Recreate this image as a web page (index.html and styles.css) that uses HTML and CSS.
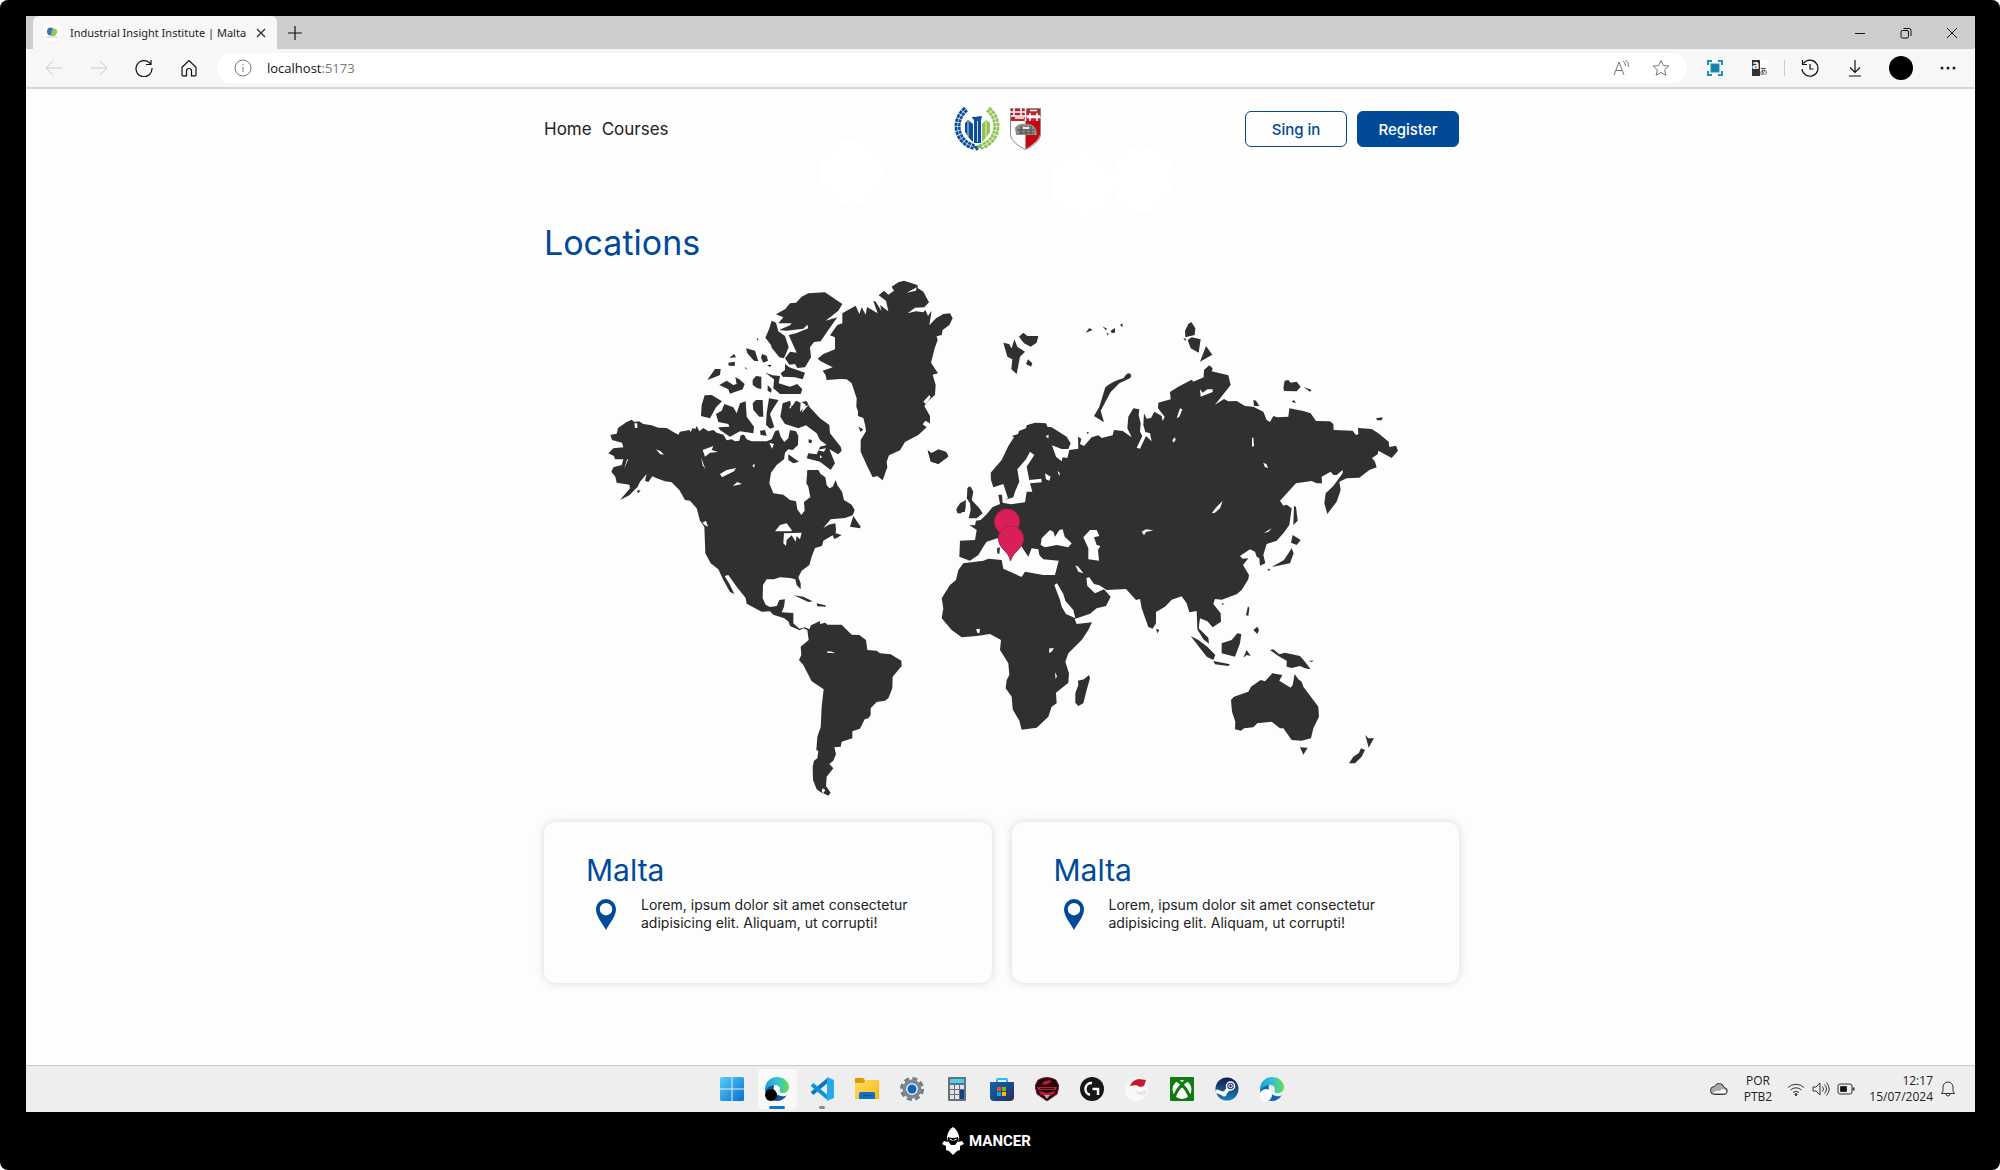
FILE: index.html
```html
<!DOCTYPE html>
<html lang="en">
<head>
<meta charset="utf-8">
<meta name="viewport" content="width=device-width, initial-scale=1">
<title>Industrial Insight Institute | Malta</title>
<link rel="stylesheet" href="styles.css">
</head>
<body>
<div class="monitor">
  <div class="screen">
    <div class="tabstrip">
      <div class="tab">
        <svg class="favicon" viewBox="0 0 16 16" aria-hidden="true"><rect width="16" height="16" rx="2" fill="#fff"/><ellipse cx="6.500" cy="6.500" rx="3.500" ry="4" fill="#3c74b4"/><path d="M7 10.500a4 4 0 0 0 4-7L8 5z" fill="#9ac45c"/><path d="M2 12h12" stroke="#dbe4f0" stroke-width="2"/></svg>
        <span class="tab-title">Industrial Insight Institute | Malta</span>
        <button class="tab-close" aria-label="Close tab"><svg class="ic10" viewBox="0 0 10 10"><path d="M1 1l8 8M9 1l-8 8"/></svg></button>
      </div>
      <button class="new-tab" aria-label="New tab"><svg class="ic14" viewBox="0 0 14 14"><path d="M7 0v14M0 7h14"/></svg></button>
      <div class="window-buttons">
        <button aria-label="Minimize"><svg class="ic12" viewBox="0 0 12 12"><path d="M1 6.500h10"/></svg></button>
        <button aria-label="Restore"><svg class="ic12" viewBox="0 0 12 12"><rect x="1" y="3.500" width="7.500" height="7.500" rx="1.500"/><path d="M3.500 1.500H9a2 2 0 0 1 2 2V9"/></svg></button>
        <button aria-label="Close"><svg class="ic12" viewBox="0 0 12 12"><path d="M1 1l10 10M11 1L1 11"/></svg></button>
      </div>
    </div>

    <div class="toolbar">
      <button class="tool dim" aria-label="Back"><svg class="ic18" viewBox="0 0 18 18"><path d="M17 9H1.500M8 2L1 9l7 7"/></svg></button>
      <button class="tool dim" aria-label="Forward"><svg class="ic18" viewBox="0 0 18 18"><path d="M1 9h15.500M10 2l7 7-7 7"/></svg></button>
      <button class="tool strong" aria-label="Refresh"><svg class="ic18" viewBox="0 0 18 18"><path d="M15.500 5A8 8 0 1 0 17 9M16 1v4.500h-5"/></svg></button>
      <button class="tool strong" aria-label="Home"><svg class="ic18" viewBox="0 0 18 18"><path d="M2 8.200L9 1.500l7 6.700V16q0 .800-.800.800H11.500V12a2.500 2.500 0 0 0-5 0v4.800H2.800Q2 16.800 2 16z"/></svg></button>
      <div class="address">
        <svg class="ic18 grey" viewBox="0 0 18 18" aria-hidden="true"><circle cx="9" cy="9" r="8"/><path d="M9 8v5M9 5v1.200"/></svg>
        <span class="url">localhost<span class="port">:5173</span></span>
        <button class="in-address" aria-label="Read aloud"><svg class="ic18 grey" viewBox="0 0 18 18"><path d="M2 16L7 3l5 13M4 11.500h6.500M11 2q2.500 1.500 2.500 5M13.500 1Q17 3 16.500 8"/></svg></button>
        <button class="in-address" aria-label="Add to favorites"><svg class="ic18 grey" viewBox="0 0 18 18"><path d="M9 1.500l2.300 5 5.500.600-4.100 3.700 1.200 5.500L9 13.500l-4.900 2.800 1.200-5.500L1.200 7.100l5.500-.600z"/></svg></button>
      </div>
      <div class="tools">
        <button class="tool" aria-label="Screenshot"><svg class="ic16 capture" viewBox="0 0 16 16"><rect x="4" y="4" width="8" height="8" fill="#1580ab"/><path stroke-width="2" d="M1 5V1h4M11 1h4v4M15 11v4h-4M5 15H1v-4"/></svg></button>
        <button class="tool" aria-label="Translate"><span class="translate"><span class="tr-a">a</span><span class="tr-b">あ</span></span></button>
        <span class="divider"></span>
        <button class="tool strong" aria-label="History"><svg class="ic18" viewBox="0 0 18 18"><path d="M2.500 4.500A8 8 0 1 1 1 10M1.500 1v4.500H6M9 5v5h3.500"/></svg></button>
        <button class="tool strong" aria-label="Downloads"><svg class="ic18" viewBox="0 0 18 18"><path d="M9 1v12M4 8.500l5 5 5-5M3 17h12"/></svg></button>
        <button class="tool wide" aria-label="Profile"><span class="avatar"></span></button>
        <button class="tool wide" aria-label="Settings and more"><svg class="ic18" viewBox="0 0 18 18"><g fill="#222" stroke="none"><circle cx="3" cy="9" r="1.500"/><circle cx="9" cy="9" r="1.500"/><circle cx="15" cy="9" r="1.500"/></g></svg></button>
      </div>
    </div>

    <main class="page">
      <div class="container">
        <span class="glow glow-a"></span><span class="glow glow-b"></span><span class="glow glow-c"></span>
        <header class="site-header">
          <nav class="nav"><a href="#">Home</a><a href="#">Courses</a></nav>
          <div class="logos">
            <svg class="laurel" viewBox="0 0 46 46" role="img" aria-label="Industrial Insight Institute">
              <path d="M12 3C4 10 1 20 6 30c3 6 8 9 14 11" fill="none" stroke="#0b4f9c" stroke-width="6" stroke-dasharray="3.400 .700"/>
              <path d="M12 3C4 10 1 20 6 30c3 6 8 9 14 11" fill="none" stroke="#fdfdfd" stroke-width=".600"/>
              <path d="M34 3c8 7 11 17 6 27-3 6-8 9-14 11" fill="none" stroke="#92c154" stroke-width="6" stroke-dasharray="3.400 .700"/>
              <path d="M34 3c8 7 11 17 6 27-3 6-8 9-14 11" fill="none" stroke="#fdfdfd" stroke-width=".600"/>
              <path d="M18 12q0-2 3-1l6-1q2 1 0 3v24h-7V14z" fill="#0b4f9c"/>
              <path d="M11 17l3-3 5 4v18l-4-4-4-6z" fill="#0b4f9c"/><path d="M14 15v16M23.500 15v21M19.500 16v20" stroke="#fdfdfd" stroke-width=".800"/>
              <path d="M28 18l4-4 4 3v9l-4 6-4 4z" fill="#92c154"/><path d="M32 15v17" stroke="#fdfdfd" stroke-width=".800"/>
              <path d="M19 40l4 5 4-5z" fill="#0b4f9c"/><path d="M23 39h4l-3 5z" fill="#92c154"/>
            </svg>
            <svg class="shield" viewBox="0 0 31 42" role="img" aria-label="Malta">
              <path d="M.500.500h30v27q-2 8-15 14-13-6-15-14z" fill="#fdfdfd" stroke="#8b8b8b"/>
              <path d="M15.500 13H30v14q-2 7-14.500 14z" fill="#c4080f"/>
              <path d="M1 1h29v12H1z" fill="#b9252c"/>
              <path d="M0 4h15M4 0v8M11 0v8M17 9.500h14M20 5v8M27 5v8M5 10h9M1 8h29M15.500 0v13M20 2.500h7" stroke="#fff" stroke-width="1.500"/>
              <path d="M5 20q3-5 10-4 8-1 11 5l1 6H6z" fill="#8d8d8d"/><path d="M7 22h18M9 25h15M11 18v8M16 18v8M21 18v8" stroke="#4f4f4f"/><path d="M13 20h6" stroke="#eee" stroke-width="2"/>
            </svg>
          </div>
          <div class="actions"><button class="btn btn-outline">Sing in</button><button class="btn btn-solid">Register</button></div>
        </header>

        <h1 class="title">Locations</h1>

        <svg class="map" viewBox="544 270 915 532" role="img" aria-label="World map">
          <!-- Americas and Greenland -->
          <g transform="translate(590 270) scale(.33333)">
            <path class="land" d="M125 449L133 456 147 454 160 462 185 466 205 473 230 474 250 486 265 494 270 485 298 480 302 486 308 474 316 477 320 468 328 484 340 474 355 484 370 480 380 488 400 494 410 511 425 508 435 514 448 512 452 496 462 494 470 508 485 514 530 514 545 508 555 484 566 480 572 500 583 516 595 505 600 480 618 484 625 498 624 525 608 540 595 538 585 548 582 568 560 585 543 608 538 640 550 670 580 674 600 690 618 694 622 718 634 735 644 722 642 696 661 681 655 650 649 640 652 600 685 600 692 612 706 622 710 645 718 655 728 650 737 630 742 645 756 665 762 690 785 704 794 720 788 736 765 744 722 748 700 774 716 764 736 760 738 778 737 790 755 795 740 804 733 807 728 796 700 812 696 828 675 834 665 860 658 885 635 902 625 922 632 940 632 958 620 945 616 928 600 924 570 922 552 928 530 928 519 945 518 985 527 1004 540 1011 560 1008 568 990 585 988 582 1010 575 1027 610 1029 610 1060 628 1076 645 1072 658 1078 663 1066 690 1053 690 1062 706 1058 712 1064 755 1064 785 1094 808 1095 828 1110 832 1140 860 1142 870 1150 902 1153 934 1172 935 1188 908 1220 907 1255 895 1285 885 1292 860 1296 842 1315 842 1335 835 1345 824 1348 810 1376 787 1384 787 1405 755 1415 752 1430 733 1432 738 1452 730 1472 718 1482 730 1495 710 1520 708 1548 722 1568 715 1577 690 1565 680 1558 669 1530 668 1490 672 1472 682 1465 685 1443 679 1440 682 1400 692 1372 695 1310 701 1258 665 1234 640 1185 627 1170 634 1155 632 1130 656 1110 652 1080 640 1075 629 1081 600 1068 596 1055 583 1045 550 1034 540 1024 515 1025 470 1001 467 984 440 950 415 915 404 918 420 945 433 972 420 966 410 948 400 930 385 898 362 880 346 850 343 770 330 752 320 715 300 692 285 690 268 660 245 637 225 634 200 625 187 619 175 636 165 632 170 612 150 635 143 650 118 676 90 690 120 655 118 644 80 638 76 620 64 605 70 592 95 585 100 568 75 568 72 558 55 550 70 535 100 532 96 518 66 510 61 495 80 491 84 474 110 456Z"/>
            <path class="land" d="M905 50L925 37 942 32 982 45 984 55 1000 65 1017 97 1003 112 975 113 953 130 978 124 1000 127 1006 120 1014 138 1025 122 1018 166 1038 145 1060 132 1080 130 1088 145 1078 165 1058 180 1055 195 1040 199 1043 210 1034 235 1023 278 1044 310 1028 314 1037 345 1035 375 1015 392 1003 408 1020 438 1020 460 1006 452 998 463 1010 472 985 495 945 516 930 541 897 556 890 575 892 592 878 631 862 618 848 622 830 585 812 545 812 510 828 484 826 468 820 444 804 438 804 424 799 410 800 385 785 340 770 328 750 327 710 330 707 316 698 302 728 292 692 274 683 266 700 252 735 238 735 202 720 196 742 165 757 160 757 130 797 107 808 132 815 112 827 134 831 111 863 130 850 93 856 94 875 124 870 105 895 124 888 92 866 76 882 62 895 74 912 62ZM558 133L586 117 600 100 618 98 635 80 655 70 705 67 757 102 745 122 707 152 742 142 715 180 692 214 672 216 660 232 663 262 645 292 622 294 615 282 598 284 585 265 600 245 620 248 596 195 618 190 655 175 652 164 640 176 590 182 567 180 600 166 605 160 565 160 580 142ZM545 152L558 158 565 184 585 198 596 232 582 265 568 262 545 233 543 225 526 203 537 178ZM468 235L495 242 505 274 492 272 472 250ZM516 252L530 257 534 272 520 278 513 263ZM418 264L432 252 438 262ZM415 278L435 275 434 288 416 287ZM352 330L375 297 392 297 390 315 374 322ZM388 345L410 332 430 345 440 342 436 322 448 328 464 342 458 358 420 371 415 358ZM488 330L498 318 514 320 514 357 502 355 488 345ZM533 345L545 358 543 368 533 362ZM526 308L548 316 570 318 566 340 600 350 622 342 637 358 632 372 570 372 550 355 552 328ZM572 310L585 300 585 282 598 292 615 298 645 308 638 328 615 322 578 320ZM344 376L365 375 396 394 378 412 360 445 333 438 335 405ZM403 402L430 412 440 430 450 400 467 394 470 440 492 470 490 490 450 484 420 500 390 480 385 472 418 470 415 462 385 456 378 432 395 422ZM488 400L498 390 518 390 520 440 508 440 490 420ZM537 385L566 390 550 415 540 432 553 472 540 476 528 464 530 430ZM578 400L600 392 605 410 618 392 632 398 630 425 648 405 635 396 650 393 658 410 690 445 718 465 720 490 752 530 755 542 745 553 718 538 735 580 722 600 690 575 650 565 655 550 680 553 690 530 710 525 690 510 680 490 648 466 625 475 585 462 571 440ZM510 482L525 480 530 497 512 495ZM595 553L627 575 610 580 595 570ZM1013 541L1022 550 1045 540 1070 548 1075 560 1045 582 1022 572ZM780 770L790 738 812 770 810 775ZM1132 655L1140 650V685L1132 675ZM1103 710L1125 695 1127 712 1110 732 1100 722ZM656 508L666 510 664 520 656 518ZM805 470L820 478 812 486ZM612 976L640 980 668 994 655 996ZM680 1000L706 1006 708 1010 682 1009ZM140 662L152 660 145 670ZM532 285L545 284 540 292ZM500 205L506 206 503 212ZM465 290L470 295 468 300ZM283 707L292 713"/>
            <path class="sea" d="M198 538L212 544 222 554 210 552ZM338 540L370 528 365 540 384 546 360 548 345 560ZM333 562L346 597 338 586ZM390 612L410 600 438 594 432 604 396 622ZM428 648L442 636 456 642ZM555 784L570 765 590 760 605 780 605 784ZM582 790L635 788 630 808 620 798 617 815 605 796 590 810 588 828 580 820ZM102 596L112 566 114 570ZM133 460H142V474H135ZM538 518L552 522 546 536ZM487 585L495 583 492 594ZM337 758L348 752 354 770 345 766ZM710 1145Q722 1141 735 1150L712 1148ZM698 1555L706 1560 700 1570 695 1562ZM950 68L980 52 978 62ZM1000 395L1018 375 1022 382 1008 402ZM680 540L708 535 702 545ZM690 555L697 562 690 564ZM605 395L598 415 603 415ZM640 410L655 406 635 428Z"/>
          </g>
          <!-- Europe, Africa, Asia and Oceania -->
          <g transform="translate(920 300) scale(.33333)">
            <path class="land" d="M212 518L245 480 265 438 282 412 276 408 294 402 297 393 318 385 320 376 345 368 378 370 382 380 395 382 440 410 452 430 445 447 425 447 396 436 408 470 425 484 428 472 442 474 448 450 475 446 474 410 484 416 480 432 492 438 515 412 535 406 545 414 578 406 582 390 608 393 635 412 622 385 625 350 640 325 658 328 656 345 662 370 660 395 667 408 650 443 660 446 678 408 695 424 690 400 676 396 670 375 672 340 680 356 693 354 703 335 725 348 728 364 734 350 714 325 715 308 752 298 750 276 775 260 815 239 820 245 851 232 852 210 868 196 878 205 875 214 925 226 932 255 885 314 912 297 925 304 950 303 975 318 1000 320 1030 335 1040 360 1050 366 1060 348 1072 352 1105 350 1108 325 1150 333 1172 340 1188 363 1230 364 1240 372 1241 390 1298 392 1308 405 1315 403 1314 384 1355 387 1375 400 1406 425 1408 441 1428 437 1434 452 1415 474 1375 452 1373 463 1356 474 1365 485 1370 502 1348 510 1318 533 1280 535 1258 545 1262 570 1250 605 1222 642 1213 610 1217 580 1240 558 1268 520V510L1250 525 1240 525 1232 515 1205 530 1206 550 1190 550 1175 543 1128 550 1080 602 1090 617 1100 614 1115 625 1108 675 1090 700 1070 722 1040 732 1030 765 1036 790 1020 797 1018 775 1010 770 1005 755 990 748 960 768 968 776 985 775 969 795 987 825 985 838 965 870 950 883 905 899 885 897 880 912 902 940 903 965 878 982 862 964 840 955 836 985 865 1013 867 1031 850 1018 832 988 830 933 808 937 800 910 785 889 755 899 735 920 708 936 708 970 698 986 685 981 665 925 660 897 648 900 618 867 560 870 538 856 522 852 508 832 499 834 502 858 525 880 552 868 572 890 558 918 530 925 510 941 464 957 470 972 516 967 505 990 485 1020 445 1060 436 1085 447 1120 445 1148 408 1178 410 1210 395 1220 385 1250 350 1283 305 1289 298 1262 278 1228 275 1190 257 1165 260 1140 268 1125 265 1090 240 1050 243 1020 210 1002 170 1008 125 1012 95 990 65 955 70 925 65 895 90 855 108 840 115 810 130 790 190 782 205 776 245 780 250 806 305 831 315 815 370 825 405 825 416 782 370 778 358 765 355 748 335 745 325 770 308 745 300 730 245 720 232 715 200 725 190 740 175 765 150 782 118 770 120 722 165 720 170 690 148 675 165 676 168 662 182 660 200 643 217 622 240 612 235 584 246 584 248 608 272 613 315 607 320 575 337 575 330 550 365 547 364 536 328 540 320 500 343 465 330 455 318 478 292 508 298 545 285 575 280 592 254 600 264 595 250 552 220 562 213 540Z"/>
            <path class="land" d="M250 128L267 132 275 145 283 118 292 140 315 155 300 170 290 222 274 208 277 178 262 170ZM297 110L310 98 322 108 355 108 350 128 332 140 312 130ZM318 192L324 178 337 190 333 200ZM522 348L538 320 556 262Q580 242 610 235L620 222Q632 216 634 228L630 235 598 250 572 276 542 332 552 367ZM497 98L508 84 518 90ZM547 79L561 86 558 91ZM572 92L585 84 585 98 575 99ZM600 75L607 70 608 82ZM560 98L567 102 562 106ZM500 396L508 398 502 402ZM795 92L805 72 814 66 826 85 824 105 796 112ZM790 115L798 116 796 124ZM803 120L815 112 842 118 836 158 812 145ZM840 185L858 138 877 164ZM1090 265L1094 242 1105 240 1112 248 1130 245 1142 260 1130 274 1093 273ZM1150 260L1175 270 1170 275ZM1115 305L1122 300 1128 310ZM1000 300L1008 302 1018 318 1002 318ZM1368 355L1388 352 1385 361 1372 361ZM1122 618L1128 620 1133 662 1120 675ZM1118 705L1142 720 1130 735 1113 728ZM1115 745L1121 760 1110 790 1055 801 1092 780ZM1043 806L1051 808 1046 814ZM23 450L35 460 55 448 78 455 85 468 55 492 32 485ZM145 560L152 560 160 575 155 600 178 625 188 640 170 655 146 655 152 630 150 610 140 595ZM120 610L138 600 135 635 112 640 109 628ZM231 745L240 742 238 762 232 760ZM507 1125L510 1135 500 1170 490 1210 475 1218 466 1208 466 1180 475 1155 474 1142 492 1138ZM708 986L718 990 712 1000ZM812 1008L835 1020 862 1040 886 1065 880 1080 860 1070ZM880 1083L930 1093 925 1098 885 1093ZM905 1030L935 1020 952 1000 964 1002 960 1030 945 1070 905 1060ZM970 1073L980 1050 992 1068 980 1065ZM978 945L984 918 988 925 985 948ZM1000 990L1012 980 1017 990 1012 1002ZM1050 1050L1060 1048 1078 1063 1095 1058 1140 1068 1155 1085 1172 1108 1155 1105 1140 1098 1115 1104 1100 1100 1100 1082 1075 1068ZM1165 1082L1182 1082 1175 1086ZM905 910L913 911 908 915ZM933 1200L942 1190 985 1175 993 1160 1022 1140 1035 1144 1057 1120 1087 1125 1078 1142 1112 1163 1118 1155 1124 1122 1135 1138 1145 1145 1150 1160 1195 1220 1197 1250 1180 1285 1173 1315 1145 1322 1115 1320 1090 1285 1080 1285 1055 1265 1012 1270 1000 1282 972 1285 963 1292 945 1288 946 1265 936 1235ZM1140 1342L1163 1343 1150 1364ZM1336 1305L1345 1315 1362 1315 1346 1343ZM1323 1345L1335 1350 1325 1370 1305 1390 1287 1390 1300 1370 1316 1360Z"/>
            <path class="sea" d="M362 735L365 715 390 690 400 695 405 710 418 690 428 688 434 710 455 730 445 742 410 735 375 742ZM490 712L510 690 530 690 538 708 522 712 530 735 541 738 534 750 537 782 505 778 505 745ZM403 855L411 850 430 882 436 902 460 930 466 955 438 942 425 920 420 900ZM466 796L475 800 490 820 475 815ZM375 520L392 530 388 542 378 538ZM412 512L420 520 418 528ZM377 408L386 404 385 416ZM770 355L780 325 787 328 778 350ZM757 420L765 412 767 420 760 428ZM840 268L848 278 862 268 878 268 878 276 842 290ZM996 415L1000 412 1002 438 996 440ZM1030 488L1040 493 1044 505 1034 500ZM875 640L890 620 908 603 900 625 885 638ZM665 695L678 688 700 691 678 696 672 706ZM1032 698L1055 685 1045 696ZM168 988L180 986 178 1000 172 998ZM388 1045L402 1045 394 1056 387 1058ZM405 1117L411 1128 407 1138Z"/>
          </g>
          <g class="pin"><path d="M1006.500 543C1005 534 994.500 532 994.500 521.500a12.500 12.500 0 0 1 25 0C1019.500 532 1009 534 1007.500 543z"/><path d="M1010.500 561C1009 551 998.500 549 998.500 538.500a12.500 12.500 0 0 1 25 0C1023.500 549 1013 551 1010.500 561z"/></g>
        </svg>

        <div class="cards">
          <article class="card">
            <h2>Malta</h2>
            <div class="card-row"><svg class="marker" viewBox="0 0 20 31" aria-hidden="true"><path fill-rule="evenodd" d="M10 31C7 25 0 18 0 10a10 10 0 0 1 20 0c0 8-7 15-10 21zM10 4a6.200 6.200 0 1 0 0 12.400A6.200 6.200 0 0 0 10 4z"/></svg><p>Lorem, ipsum dolor sit amet consectetur adipisicing elit. Aliquam, ut corrupti!</p></div>
          </article>
          <article class="card">
            <h2>Malta</h2>
            <div class="card-row"><svg class="marker" viewBox="0 0 20 31" aria-hidden="true"><path fill-rule="evenodd" d="M10 31C7 25 0 18 0 10a10 10 0 0 1 20 0c0 8-7 15-10 21zM10 4a6.200 6.200 0 1 0 0 12.400A6.200 6.200 0 0 0 10 4z"/></svg><p>Lorem, ipsum dolor sit amet consectetur adipisicing elit. Aliquam, ut corrupti!</p></div>
          </article>
        </div>
      </div>
    </main>

    <footer class="taskbar">
      <svg width="0" height="0" class="defs" aria-hidden="true"><defs>
        <linearGradient id="win" x1="0" y1="0" x2="1" y2="1"><stop stop-color="#57cdf9"/><stop offset="1" stop-color="#0571cf"/></linearGradient>
        <linearGradient id="edge" x1="0" x2="1"><stop stop-color="#1c9ee0"/><stop offset=".5" stop-color="#30c3d2"/><stop offset="1" stop-color="#6adb54"/></linearGradient>
        <linearGradient id="folder" x1="0" y1="0" x2="1" y2="1"><stop stop-color="#ffdf6b"/><stop offset="1" stop-color="#fbb50e"/></linearGradient>
        <linearGradient id="store" x1="0" y1="0" x2="1" y2="1"><stop stop-color="#0a69b8"/><stop offset="1" stop-color="#2a2c58"/></linearGradient>
        <linearGradient id="steam" x1="0" y1="0" x2="0" y2="1"><stop stop-color="#131c48"/><stop offset="1" stop-color="#1681bd"/></linearGradient>
      </defs></svg>
      <div class="apps">
        <button class="app" aria-label="Start"><svg viewBox="0 0 24 24"><path fill="url(#win)" d="M0 1.500Q0 0 1.500 0h10v11.500H0zM12.500 0h10Q24 0 24 1.500v10H12.500zM0 12.500h11.500V24h-10Q0 24 0 22.500zM12.500 12.500H24v10q0 1.500-1.500 1.500h-10z"/></svg></button>
        <button class="app active" aria-label="Edge"><svg viewBox="0 0 24 24"><path fill="#0c56a4" d="M0 12q3-6 9-4-2 9 7 11 4 1 6-1-4 6-10 6A12 12 0 0 1 0 12z"/><path fill="url(#edge)" d="M0 11C1 4 6 0 12 0c7 0 12 5 12 10 0 4-3 6-6 6-4 0-4-2-3-4 0-2-2-4-5-4-4 0-8 2-10 7z"/><circle cx="6" cy="18" r="6"/></svg></button>
        <button class="app running" aria-label="Visual Studio Code"><svg viewBox="0 0 24 24"><path fill="none" stroke="#0876bb" stroke-width="4" d="M18 3L2 16.500"/><path fill="none" stroke="#0f91dc" stroke-width="4" d="M2 7.500L18 21"/><path fill="#29a8f2" d="M17 0l7 3v18l-7 3z"/></svg></button>
        <button class="app" aria-label="File Explorer"><svg viewBox="0 0 24 24"><path fill="#dc9a0a" d="M0 1h8l2 2v4H0z"/><path fill="url(#folder)" d="M0 6h8l3-3h13v19H0z"/><path fill="#0f6fc8" d="M4 22v-5q0-2 2-2h12q2 0 2 2v5z"/><path stroke="#0a4e98" d="M8 18.500h8"/></svg></button>
        <button class="app" aria-label="Settings"><svg viewBox="0 0 24 24"><circle cx="12" cy="12" r="10.500" fill="none" stroke="#737d88" stroke-width="3" stroke-dasharray="5 3.250"/><circle cx="12" cy="12" r="7.500" fill="none" stroke="#7d8791" stroke-width="4"/><circle cx="12" cy="12" r="5.800" fill="#f4f4f4"/><circle cx="12" cy="12" r="4.500" fill="#1164b7"/></svg></button>
        <button class="app" aria-label="Calculator"><svg viewBox="0 0 24 24"><rect x="3" width="18" height="24" rx="1" fill="#66717b"/><rect x="5" y="2" width="14" height="4" fill="#45d3f5"/><path fill="#dfe4e8" d="M5 8h4v4H5zM10 8h4v4h-4zM15 8h4v4h-4zM5 13h4v4H5zM10 13h4v4h-4zM5 18h4v4H5zM10 18h4v4h-4z"/><path fill="#104487" d="M15 13h4v9h-4z"/></svg></button>
        <button class="app" aria-label="Microsoft Store"><svg viewBox="0 0 24 24"><path fill="none" stroke="#28bdf2" stroke-width="2" d="M7 6V3q0-1 1-1h8q1 0 1 1v3"/><path fill="url(#store)" d="M0 5h24v15q0 4-4 4H4q-4 0-4-4z"/><path fill="#f25022" d="M7 10h4v4H7z"/><path fill="#7fba00" d="M12 10h4v4h-4z"/><path fill="#1aa3ec" d="M7 15h4v4H7z"/><path fill="#ffb900" d="M12 15h4v4h-4z"/></svg></button>
        <button class="app" aria-label="Redragon"><svg viewBox="0 0 24 24"><path fill="#1b0b0f" stroke="#861428" d="M3 3q9-5 18 0l3 6-2 8-10 7-10-7L0 9z"/><path fill="#c91635" d="M7 6q5-4 10-2l-4 3-4 1zM2 10h20l-1 3H3zM4 14l8 2 8-2-1 3-7 3-7-3z"/><path d="M5 11.500h14" stroke="#1b0b0f"/><path fill="#aaa" d="M9 18h6l-3 4z"/></svg></button>
        <button class="app" aria-label="Logitech G HUB"><svg viewBox="0 0 24 24"><circle cx="12" cy="12" r="12" fill="#171717"/><path fill="none" stroke="#fff" stroke-width="2.500" d="M12 6a6 6 0 0 0-2 11.800M12.500 12H18v6"/></svg></button>
        <button class="app" aria-label="Gaming client"><svg viewBox="0 0 24 24"><circle cx="11.500" cy="12.500" r="11.500" fill="#f9f9f9"/><path fill="#c9152d" d="M5 9q2-6 9-7l7 1-2 6-4 1-4-2z"/><path fill="#e6e6e6" d="M10 12q2 5 12 1-1 7-7 5-4-1-5-6z"/></svg></button>
        <button class="app" aria-label="Xbox"><svg viewBox="0 0 24 24"><rect width="24" height="24" rx="1" fill="#107c10"/><circle cx="12" cy="12.500" r="9.500" fill="#fff"/><path fill="none" stroke="#107c10" stroke-width="3" d="M4 21Q7 12 12 8q5 4 8 13M5 3q5 1 7 5 2-4 7-5"/></svg></button>
        <button class="app" aria-label="Steam"><svg viewBox="0 0 24 24"><circle cx="12" cy="12" r="11.500" fill="url(#steam)"/><path d="M1 14l8 3 6-7" fill="none" stroke="#fff" stroke-width="4"/><circle cx="15.500" cy="9" r="4" fill="#173164" stroke="#fff" stroke-width="1.500"/><circle cx="15.500" cy="9" r="1.800" fill="none" stroke="#fff"/><circle cx="9" cy="17" r="2.500" fill="#fff"/></svg></button>
        <button class="app" aria-label="Edge profile"><svg viewBox="0 0 24 24"><path fill="#0b64b6" d="M0 12q3-6 9-4-2 9 7 11 4 1 6-1-4 6-10 6A12 12 0 0 1 0 12z"/><path fill="url(#edge)" d="M0 11C1 4 6 0 12 0c7 0 12 5 12 10 0 4-3 6-6 6-4 0-4-2-3-4 0-2-2-4-5-4-4 0-8 2-10 7z"/><circle cx="6" cy="18" r="6" fill="#fff"/></svg></button>
      </div>
      <div class="tray">
        <svg class="ic18" viewBox="0 0 18 18" aria-label="Cloud" role="img"><path fill="#aaa" d="M4.500 14.500h9a3.500 3.500 0 0 0 .500-7 5 5 0 0 0-9.500-1 4 4 0 0 0 0 8z"/><path fill="#fafafa" stroke="none" d="M3 13q3-3 7-2 3-4 6 0v2z"/></svg>
        <div class="lang">POR<br>PTB2</div>
        <div class="status">
          <svg class="ic18" viewBox="0 0 18 18" aria-label="Wi-Fi" role="img"><path d="M1 7.500a11.500 11.500 0 0 1 16 0M3.500 10a8 8 0 0 1 11 0M6 12.500a4.500 4.500 0 0 1 6 0"/><circle cx="9" cy="14.500" r="1" fill="#333"/></svg>
          <svg class="ic18" viewBox="0 0 18 18" aria-label="Volume" role="img"><path d="M1 7h3l4-4v12l-4-4H1zM10.500 6.500q2 2.500 0 5M12.500 4.500q4 4.500 0 9M14.500 2.500q5.500 6.500 0 13"/></svg>
          <svg class="ic18" viewBox="0 0 18 18" aria-label="Battery" role="img"><rect x="1" y="4" width="14" height="10" rx="2"/><path d="M3.500 6.500h6v5h-6z" fill="#111"/><path d="M16.500 7.500v3" stroke-width="2"/></svg>
        </div>
        <div class="clock">12:17<br>15/07/2024</div>
        <svg class="ic18" viewBox="0 0 18 18" aria-label="Notifications" role="img"><path d="M2.500 13.500L4 11V7a5 5 0 0 1 10 0v4l1.500 2.500zM7 14a2 2 0 0 0 4 0"/></svg>
      </div>
    </footer>
  </div>
  <div class="brand">
    <svg class="brand-mark" viewBox="0 0 22 28" aria-hidden="true"><path fill="#fff" d="M11 0q5 3 6 10l-1 5 4-1 2 3-4 2v4l-3 1-4 4-4-4-3-1v-4l-4-2 2-3 4 1-1-5Q6 3 11 0z"/><path d="M6 10q5 2 10 0v4l-3 4H9l-3-4z"/><path d="M7.500 12l3 1.500M14.500 12l-3 1.500" stroke="#fff"/></svg>
    <span>MANCER</span>
  </div>
</div>
</body>
</html>
```

FILE: styles.css
```css
* { box-sizing: border-box; }
body { margin: 0; background: #fff; font-family: "Open Sans", "Noto Sans", sans-serif; color: #222; }
button { margin: 0; padding: 0; border: 0; background: none; font: inherit; color: inherit; display: flex; align-items: center; justify-content: center; }
svg { display: block; flex: none; }
h1, h2, p { margin: 0; }

.monitor { min-height: 100vh; display: flex; flex-direction: column; padding: 16px 25px 0 26px; background: #000; border-radius: 8px; }
.screen { flex: 1; display: flex; flex-direction: column; background: #fdfdfd; }

.ic10, .ic12, .ic14, .ic16, .ic18 { fill: none; stroke: #333; stroke-width: 1; }
.ic10 { width: 10px; height: 10px; }
.ic12 { width: 12px; height: 12px; }
.ic14 { width: 14px; height: 14px; }
.ic16 { width: 16px; height: 16px; }
.ic18 { width: 18px; height: 18px; }
.strong svg { stroke: #111; stroke-width: 1.2; }
.grey { stroke: #777; }
.capture { stroke: #2390b8; }

.tabstrip { display: flex; height: 33px; padding-left: 7px; background: #cdcdcd; }
.tab { display: flex; align-items: center; width: 244px; padding: 0 10px 0 11px; background: #f7f7f7; border-radius: 6px 6px 0 0; }
.favicon { width: 16px; height: 16px; margin-right: 10px; }
.tab-title { flex: 1; font-family: "Noto Sans", sans-serif; font-size: 11px; white-space: nowrap; }
.tab-close { width: 12px; height: 20px; }
.tab-close svg { stroke-width: 1.4; }
.new-tab { width: 35px; }
.new-tab svg { stroke: #111; stroke-width: 1.2; }
.window-buttons { display: flex; margin-left: auto; }
.window-buttons button { width: 46px; }
.window-buttons svg { stroke: #111; }

.toolbar { display: flex; align-items: center; height: 40px; padding: 0 4px 0 5px; background: #f7f7f7; border-bottom: 2px solid #d6d6d6; }
.tool { width: 45px; height: 30px; }
.tool.wide { width: 47px; }
.dim svg { stroke: #ccc; }
.address { flex: 1; display: flex; align-items: center; height: 30px; margin: 0 5px 0 6px; padding: 0 6px 0 17px; background: #fff; border-radius: 15px; }
.url { flex: 1; margin-left: 15px; font-size: 13px; color: #111; }
.port { color: #777; }
.in-address { width: 40px; height: 30px; }
.tools { display: flex; align-items: center; }
.divider { width: 1px; height: 16px; margin: 0 2px; background: #ccc; }
.avatar { width: 24px; height: 24px; border-radius: 50%; background: #000; }
.translate { display: flex; align-items: flex-end; width: 16px; height: 16px; background: #fff; font-size: 8px; line-height: 10px; }
.tr-a { width: 9px; height: 16px; background: #333; color: #fff; font-size: 12px; font-weight: 700; }
.tr-b { font-family: "Noto Sans CJK JP", sans-serif; }

.page { flex: 1; padding: 0 20px 40px 22px; font-family: Inter, sans-serif; }
.container { position: relative; max-width: 915px; margin: 0 auto; }
.glow { position: absolute; width: 64px; height: 66px; border-radius: 50%; background: #fff; }
.glow-a { left: 275px; top: 51px; }
.glow-b { left: 506px; top: 62px; }
.glow-c { left: 567px; top: 57px; }
.site-header { position: relative; display: grid; grid-template-columns: 1fr auto 1fr; align-items: center; height: 80px; }
.nav { display: flex; gap: 10px; }
.nav a { color: #222; text-decoration: none; font-size: 17px; }
.logos { display: flex; align-items: center; gap: 10px; padding-right: 8px; }
.laurel { width: 46px; height: 46px; }
.shield { width: 31px; height: 42px; }
.actions { display: flex; justify-content: flex-end; gap: 10px; }
.btn { width: 102px; height: 36px; border: 1px solid #004a98; border-radius: 6px; font-size: 15px; font-weight: 500; color: #004a98; }
.btn-solid { background: #004a98; color: #fff; }
.title { margin-top: 54px; font-size: 34px; font-weight: 400; line-height: 40px; color: #004a98; }
.map { width: 100%; height: auto; margin-top: 7px; }
.land { fill: #303030; }
.sea { fill: #fdfdfd; }
.pin { fill: #d81f58; stroke: #b51b4c; stroke-width: 1; }
.cards { display: grid; grid-template-columns: 1fr 1fr; gap: 20px; margin-top: 20px; }
.card { min-height: 161px; padding: 28px 42px; background: #fdfdfd; border-radius: 12px; box-shadow: 0 0 10px rgba(0, 0, 0, .15); }
.card h2 { font-size: 30px; font-weight: 400; line-height: 40px; color: #004a98; }
.card-row { display: flex; gap: 25px; margin-top: 6px; padding-left: 10px; }
.card p { font-size: 14px; line-height: 18px; max-width: 280px; }
.marker { width: 20px; height: 31px; margin-top: 3px; fill: #004a98; }

.taskbar { display: grid; grid-template-columns: 1fr auto 1fr; align-items: center; height: 47px; padding-left: 3px; background: #eee; border-top: 1px solid #c8c8c8; }
.defs { position: absolute; }
.apps { grid-column: 2; display: flex; }
.app { position: relative; width: 45px; height: 40px; }
.app svg { width: 24px; height: 24px; }
.app.active { width: 39px; margin: 0 3px; background: #f9f9f9; border-radius: 4px; }
.app.active::after, .app.running::after { content: ""; position: absolute; bottom: 0; width: 16px; height: 3px; border-radius: 2px; background: #0d78d0; }
.app.running::after { width: 6px; background: #888; }
.tray { grid-column: 3; display: flex; justify-content: flex-end; align-items: center; padding-right: 18px; font-size: 12px; line-height: 16px; }
.lang { width: 34px; margin-left: 13px; text-align: center; }
.status { display: flex; gap: 7px; margin-left: 12px; }
.clock { width: 72px; margin: 0 6px; text-align: right; }

.brand { display: flex; align-items: center; justify-content: center; gap: 5px; height: 58px; padding-right: 28px; color: #fff; font-family: Roboto, sans-serif; font-size: 15px; font-weight: 700; }
.brand-mark { width: 22px; height: 28px; }
```
